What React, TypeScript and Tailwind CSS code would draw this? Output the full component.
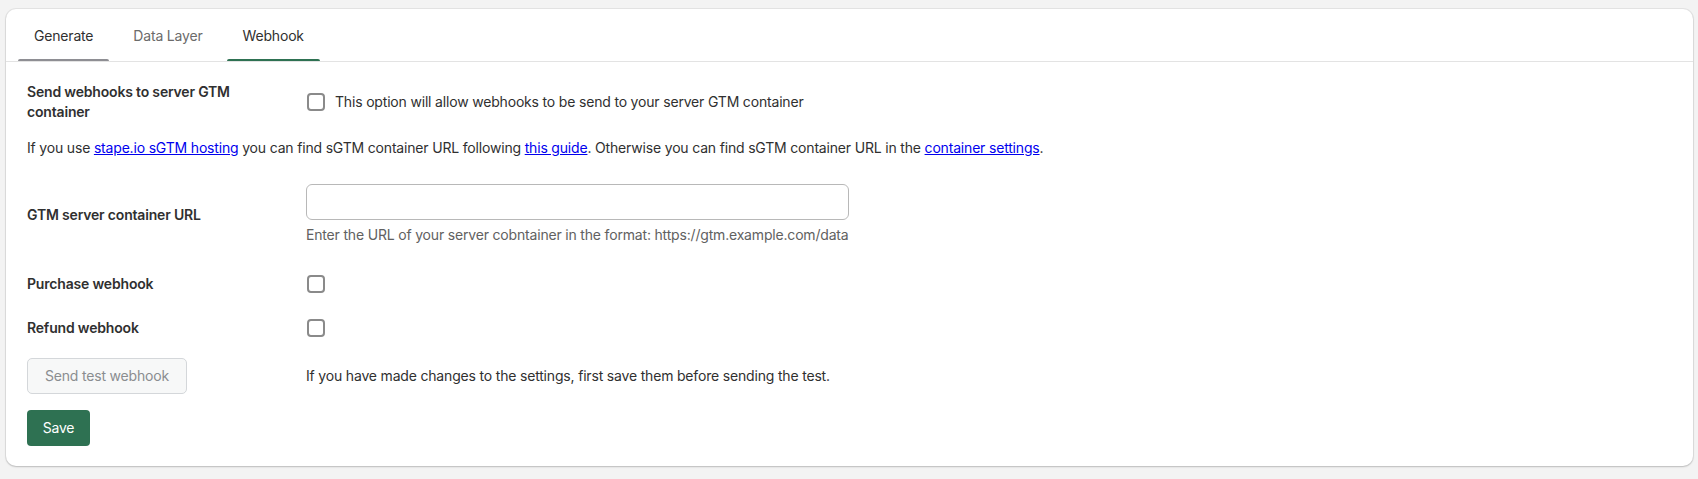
import React from "react";

function Checkbox() {
  return (
    <span className="inline-block w-[18px] h-[18px] ml-px rounded-[4px] border-2 border-[#8a8a8a] bg-white shrink-0" />
  );
}

export default function App() {
  const font = { fontFamily: "Inter, 'Noto Sans', sans-serif" };
  return (
    <div className="w-[1698px] h-[479px] bg-[#f3f3f3] pt-[9px] pl-[6px]" style={font}>
      <div className="w-[1687px] h-[457px] overflow-hidden bg-white rounded-[10px] shadow-[0_0_0_1px_rgba(0,0,0,0.06),0_1px_2px_rgba(0,0,0,0.18)] text-[14px] tracking-[-0.18px] text-[#303030]">
        {/* Tabs */}
        <div className="flex gap-2 px-[12px] h-[53px] border-b border-[#e3e3e3]">
          <div className="flex flex-col">
            <span className="px-4 mt-[17px] leading-5 text-[#303030]">Generate</span>
            <span className="mt-[13px] h-[3px] rounded-t-[3px] bg-[#8e8e93]" />
          </div>
          <div className="flex flex-col">
            <span className="px-4 mt-[17px] leading-5 text-[#6b6b6b]">Data Layer</span>
            <span className="mt-[13px] h-[3px]" />
          </div>
          <div className="flex flex-col">
            <span className="px-4 mt-[17px] leading-5 text-[#303030]">Webhook</span>
            <span className="mt-[13px] h-[3px] rounded-t-[3px] bg-[#2e7152]" />
          </div>
        </div>

        {/* Content */}
        <div className="px-[21px] pt-[20px]">
          <div className="grid grid-cols-[279px_1fr] items-center">
            <div className="font-semibold leading-5 max-w-[250px]">
              Send webhooks to server GTM container
            </div>
            <label className="flex items-center gap-[10px] leading-5">
              <Checkbox />
              <span>This option will allow webhooks to be send to your server GTM container</span>
            </label>
          </div>

          <p className="mt-[16px] leading-5 whitespace-nowrap">
            If you use{" "}
            <a className="text-[#0000ee] underline" href="#">
              stape.io sGTM hosting
            </a>{" "}
            you can find sGTM container URL following{" "}
            <a className="text-[#0000ee] underline" href="#">
              this guide
            </a>
            . Otherwise you can find sGTM container URL in the{" "}
            <a className="text-[#0000ee] underline" href="#">
              container settings
            </a>
            .
          </p>

          <div className="mt-[26px] grid grid-cols-[279px_1fr] items-center">
            <div className="font-semibold leading-5">GTM server container URL</div>
            <div className="w-[543px]">
              <input
                type="text"
                className="block w-full h-[36px] rounded-[6px] border border-[#b8b8b8] bg-white px-3 outline-none"
              />
              <div className="mt-[5px] leading-5 text-[#616161] whitespace-nowrap">
                Enter the URL of your server cobntainer in the format: https://gtm.example.com/data
              </div>
            </div>
          </div>

          <div className="mt-[29px] grid grid-cols-[279px_1fr] items-center h-5">
            <div className="font-semibold leading-5">Purchase webhook</div>
            <div className="flex items-center">
              <Checkbox />
            </div>
          </div>

          <div className="mt-[24px] grid grid-cols-[279px_1fr] items-center h-5">
            <div className="font-semibold leading-5">Refund webhook</div>
            <div className="flex items-center">
              <Checkbox />
            </div>
          </div>

          <div className="mt-[20px] grid grid-cols-[279px_1fr] items-center">
            <div>
              <button className="h-[36px] w-[160px] rounded-[5px] border border-[#d4d7da] bg-[#f7f8f8] text-[#8a8d90] leading-5 tracking-[-0.18px]">
                Send test webhook
              </button>
            </div>
            <div className="leading-5">
              If you have made changes to the settings, first save them before sending the test.
            </div>
          </div>

          <button className="mt-[16px] h-[36px] w-[63px] rounded-[4px] bg-[#2e7152] text-white leading-5 tracking-[-0.18px]">
            Save
          </button>
        </div>
      </div>
    </div>
  );
}
